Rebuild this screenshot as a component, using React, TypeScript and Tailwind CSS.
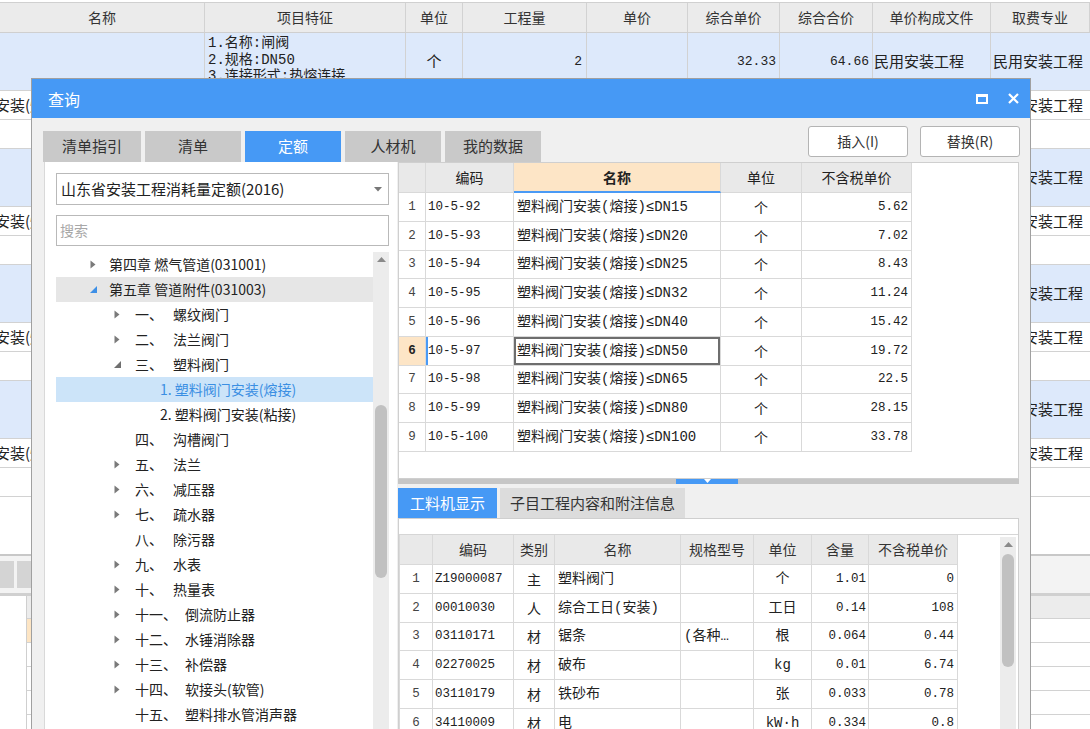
import React from "react";

const cjk = "font-['Noto_Sans_CJK_SC','Noto_Sans',sans-serif]";
const mono = "font-['Liberation_Mono','Noto_Sans_CJK_SC',monospace]";

const bgCols = "grid grid-cols-[205px_201px_57px_124px_101px_92px_93px_118px_99px]";

function Background() {
  const heads = ["名称", "项目特征", "单位", "工程量", "单价", "综合单价", "综合合价", "单价构成文件", "取费专业"];
  const groups = [0, 1, 2, 3];
  return (
    <div className="w-[1090px]">
      <div className="h-[3px] border-b border-[#d0d0d0] bg-white" />
      <div className={`${bgCols} h-[30px] bg-[#ebebeb] border-b border-[#cfcfcf]`}>
        {heads.map((h) => (
          <div key={h} className="flex items-center justify-center border-r border-[#d2d2d2] text-[14px] text-[#333]">
            {h}
          </div>
        ))}
      </div>
      {groups.map((g) => (
        <div key={g}>
          <div className={`${bgCols} h-[58px] bg-[#dde9fb] border-b border-[#d2d2d2] text-[15px] text-[#222]`}>
            <div className="border-r border-[#d2d2d2]" />
            <div className={`border-r border-[#d2d2d2] pl-[3px] pt-[2px] text-[14px] leading-[16.5px] ${mono} overflow-hidden`}>
              <div>1.名称:闸阀</div>
              <div>2.规格:DN50</div>
              <div>3.连接形式:热熔连接</div>
            </div>
            <div className="border-r border-[#d2d2d2] flex items-center justify-center">个</div>
            <div className={`border-r border-[#d2d2d2] flex items-center justify-end pr-[4px] text-[13px] ${mono}`}>2</div>
            <div className="border-r border-[#d2d2d2]" />
            <div className={`border-r border-[#d2d2d2] flex items-center justify-end pr-[3px] text-[13px] ${mono}`}>32.33</div>
            <div className={`border-r border-[#d2d2d2] flex items-center justify-end pr-[3px] text-[13px] ${mono}`}>64.66</div>
            <div className="border-r border-[#d2d2d2] flex items-center pl-[1px] whitespace-nowrap overflow-hidden">民用安装工程</div>
            <div className="flex items-center pl-[2px] whitespace-nowrap overflow-hidden">民用安装工程</div>
          </div>
          <div className={`${bgCols} h-[29px] border-b border-[#d2d2d2] text-[15px] text-[#222] bg-white`}>
            <div className="border-r border-[#d2d2d2] flex items-center overflow-hidden whitespace-nowrap">
              <span className="ml-[-5px]">安装(熔接)</span>
            </div>
            <div className="border-r border-[#d2d2d2]" />
            <div className="border-r border-[#d2d2d2]" />
            <div className="border-r border-[#d2d2d2]" />
            <div className="border-r border-[#d2d2d2]" />
            <div className="border-r border-[#d2d2d2]" />
            <div className="border-r border-[#d2d2d2]" />
            <div className="border-r border-[#d2d2d2]" />
            <div className="flex items-center pl-[2px] whitespace-nowrap overflow-hidden">民用安装工程</div>
          </div>
          <div className="h-[29px] border-b border-[#d2d2d2] bg-white" />
        </div>
      ))}
      <div className="h-[59px] border-b-2 border-[#c8c8c8] bg-white" />
      <div className="h-[37px] bg-[#f3f3f3] flex items-center gap-[3px]">
        <div className="w-[14px] h-[27px] bg-[#d4d4d4]" />
        <div className="w-[14px] h-[27px] bg-[#d4d4d4]" />
      </div>
      <div className="h-[3px] bg-[#d0d0d0]" />
      <div className="flex">
        <div className="w-[27px] h-[140px] border-r border-[#cfcfcf] bg-white" />
        <div className="flex-1">
          <div className="h-[23px] bg-[#ececec] border-b border-[#d2d2d2]" />
          <div className="h-[24px] border-b border-[#d2d2d2] flex">
            <div className="w-[8px] bg-[#fde5c4]" />
          </div>
          <div className="h-[24px] border-b border-[#d2d2d2]" />
          <div className="h-[24px] border-b border-[#d2d2d2]" />
          <div className="h-[24px] border-b border-[#d2d2d2]" />
        </div>
      </div>
    </div>
  );
}

function Collapsed() {
  return (
    <svg width="6" height="9" viewBox="0 0 6 9">
      <path d="M0.5 0.5 L5.5 4.5 L0.5 8.5 Z" fill="#7a7a7a" />
    </svg>
  );
}

function Expanded({ blue }: { blue?: boolean }) {
  return (
    <svg width="7" height="7" viewBox="0 0 7 7">
      <path d="M7 0 L7 7 L0 7 Z" fill={blue ? "#3d8fe6" : "#6f6f6f"} />
    </svg>
  );
}

type Node = { lvl: 0 | 1 | 2; arrow?: "c" | "eb" | "eg"; num?: string; text: string; gray?: boolean; sel?: boolean };

const tree: Node[] = [
  { lvl: 0, arrow: "c", text: "第四章 燃气管道(031001)" },
  { lvl: 0, arrow: "eb", text: "第五章 管道附件(031003)", gray: true },
  { lvl: 1, arrow: "c", num: "一、", text: "螺纹阀门" },
  { lvl: 1, arrow: "c", num: "二、", text: "法兰阀门" },
  { lvl: 1, arrow: "eg", num: "三、", text: "塑料阀门" },
  { lvl: 2, text: "1. 塑料阀门安装(熔接)", sel: true },
  { lvl: 2, text: "2. 塑料阀门安装(粘接)" },
  { lvl: 1, num: "四、", text: "沟槽阀门" },
  { lvl: 1, arrow: "c", num: "五、", text: "法兰" },
  { lvl: 1, arrow: "c", num: "六、", text: "减压器" },
  { lvl: 1, arrow: "c", num: "七、", text: "疏水器" },
  { lvl: 1, num: "八、", text: "除污器" },
  { lvl: 1, arrow: "c", num: "九、", text: "水表" },
  { lvl: 1, arrow: "c", num: "十、", text: "热量表" },
  { lvl: 1, arrow: "c", num: "十一、", text: "倒流防止器" },
  { lvl: 1, arrow: "c", num: "十二、", text: "水锤消除器" },
  { lvl: 1, arrow: "c", num: "十三、", text: "补偿器" },
  { lvl: 1, arrow: "c", num: "十四、", text: "软接头(软管)" },
  { lvl: 1, num: "十五、", text: "塑料排水管消声器" },
];

function TreeRow({ n }: { n: Node }) {
  const pad = n.lvl === 0 ? "pl-[29px]" : n.lvl === 1 ? "pl-[53px]" : "pl-[104px]";
  const tone = n.sel ? "bg-[#cce4f9] text-[#3b8fe3]" : n.gray ? "bg-[#e6e6e6] text-[#222]" : "text-[#222]";
  return (
    <div className={`h-[25px] flex items-center ${pad} ${tone} text-[14px] whitespace-nowrap`}>
      {n.lvl < 2 && (
        <span className="w-[16px] h-[25px] flex items-center justify-center">
          {n.arrow === "c" && <Collapsed />}
          {n.arrow === "eb" && <Expanded blue />}
          {n.arrow === "eg" && <Expanded />}
        </span>
      )}
      {n.lvl === 0 && <span className="ml-[8px]">{n.text}</span>}
      {n.lvl === 1 && (
        <>
          <span className="ml-[10px]">{n.num}</span>
          <span className={n.num && n.num.length > 2 ? "ml-[8px]" : "ml-[10px]"}>{n.text}</span>
        </>
      )}
      {n.lvl === 2 && <span>{n.text}</span>}
    </div>
  );
}

function ScrollArrow({ up }: { up?: boolean }) {
  return (
    <svg width="9" height="5" viewBox="0 0 9 5">
      <path d={up ? "M0 5 L4.5 0 L9 5 Z" : "M0 0 L4.5 5 L9 0 Z"} fill="#8a8a8a" />
    </svg>
  );
}

const topRows = [
  ["10-5-92", "DN15", "5.62"],
  ["10-5-93", "DN20", "7.02"],
  ["10-5-94", "DN25", "8.43"],
  ["10-5-95", "DN32", "11.24"],
  ["10-5-96", "DN40", "15.42"],
  ["10-5-97", "DN50", "19.72"],
  ["10-5-98", "DN65", "22.5"],
  ["10-5-99", "DN80", "28.15"],
  ["10-5-100", "DN100", "33.78"],
];
const rowH = ["h-[29px]", "h-[29px]", "h-[28px]", "h-[29px]", "h-[29px]", "h-[29px]", "h-[28px]", "h-[29px]", "h-[29px]"];

const lowRows = [
  ["1", "Z19000087", "主", "塑料阀门", "", "个", "1.01", "0"],
  ["2", "00010030", "人", "综合工日(安装)", "", "工日", "0.14", "108"],
  ["3", "03110171", "材", "锯条", "(各种…", "根", "0.064", "0.44"],
  ["4", "02270025", "材", "破布", "", "kg", "0.01", "6.74"],
  ["5", "03110179", "材", "铁砂布", "", "张", "0.033", "0.78"],
  ["6", "34110009", "材", "电", "", "kW·h", "0.334", "0.8"],
];

const line = "border-r border-b border-[#d9d9d9]";

function TopTable() {
  return (
    <div className="w-[514px] text-[#222]">
      <div className="flex h-[30px] text-[14px]">
        <div className={`w-[27px] ${line} bg-[#e9e9e9]`} />
        <div className={`w-[88px] ${line} bg-[#e9e9e9] flex items-center justify-center`}>编码</div>
        <div className="w-[207px] border-r border-[#d9d9d9] border-b-2 border-b-[#4a9af5] bg-[#fde5c6] flex items-center justify-center font-bold">名称</div>
        <div className={`w-[81px] ${line} bg-[#e9e9e9] flex items-center justify-center`}>单位</div>
        <div className={`w-[110px] ${line} bg-[#e9e9e9] flex items-center justify-center`}>不含税单价</div>
      </div>
      {topRows.map((r, i) => {
        const sel = i === 5;
        return (
          <div key={r[0]} className={`flex ${rowH[i]}`}>
            <div className={`w-[27px] ${line} flex items-center justify-center text-[12.5px] ${mono} ${sel ? "bg-[#fde5c6] font-bold text-[#222]" : "text-[#444]"}`}>
              {i + 1}
            </div>
            <div className={`w-[88px] ${line} flex items-center pl-[2px] text-[12.5px] ${mono} ${sel ? "shadow-[inset_2px_0_0_#4a9af5]" : ""}`}>
              {r[0]}
            </div>
            <div className={`w-[207px] ${line} flex items-center pl-[3px] text-[14px] ${mono} whitespace-nowrap ${sel ? "shadow-[inset_0_0_0_2px_#6e6e6e]" : ""}`}>
              塑料阀门安装(熔接)≤{r[1]}
            </div>
            <div className={`w-[81px] ${line} flex items-center justify-center text-[14px]`}>个</div>
            <div className={`w-[110px] ${line} flex items-center justify-end pr-[3px] text-[12.5px] ${mono}`}>{r[2]}</div>
          </div>
        );
      })}
    </div>
  );
}

function LowTable() {
  return (
    <div className="w-[559px] text-[#222]">
      <div className="flex h-[30px] text-[14px] bg-[#e9e9e9] text-[#333]">
        <div className={`w-[34px] ${line} border-l`} />
        <div className={`w-[81px] ${line} flex items-center justify-center`}>编码</div>
        <div className={`w-[41px] ${line} flex items-center justify-center`}>类别</div>
        <div className={`w-[126px] ${line} flex items-center justify-center`}>名称</div>
        <div className={`w-[73px] ${line} flex items-center justify-center`}>规格型号</div>
        <div className={`w-[58px] ${line} flex items-center justify-center`}>单位</div>
        <div className={`w-[57px] ${line} flex items-center justify-center`}>含量</div>
        <div className={`w-[89px] ${line} flex items-center justify-center`}>不含税单价</div>
      </div>
      {lowRows.map((r, i) => (
        <div key={r[0]} className={`flex ${rowH[i]}`}>
          <div className={`w-[34px] ${line} border-l flex items-center justify-center text-[12.5px] ${mono} text-[#444]`}>{r[0]}</div>
          <div className={`w-[81px] ${line} flex items-center pl-[2px] text-[12.5px] ${mono}`}>{r[1]}</div>
          <div className={`w-[41px] ${line} flex items-center justify-center text-[14px]`}>{r[2]}</div>
          <div className={`w-[126px] ${line} flex items-center pl-[3px] text-[14px] ${mono} whitespace-nowrap`}>{r[3]}</div>
          <div className={`w-[73px] ${line} flex items-center pl-[3px] text-[14px] ${mono} whitespace-nowrap overflow-hidden`}>{r[4]}</div>
          <div className={`w-[58px] ${line} flex items-center justify-center text-[14px] ${mono}`}>{r[5]}</div>
          <div className={`w-[57px] ${line} flex items-center justify-end pr-[2px] text-[12.5px] ${mono}`}>{r[6]}</div>
          <div className={`w-[89px] ${line} flex items-center justify-end pr-[3px] text-[12.5px] ${mono}`}>{r[7]}</div>
        </div>
      ))}
    </div>
  );
}

function Dialog() {
  const tabs = ["清单指引", "清单", "定额", "人材机", "我的数据"];
  return (
    <div className="absolute left-[31px] top-[78px] w-[1000px] h-[672px] border border-[#a0a0a0] bg-[#f0f0f0] flex flex-col">
      <div className="h-[39px] shrink-0 bg-[#4699f5] flex items-center justify-between pl-[16px] pr-[11px]">
        <span className="text-white text-[16px]">查询</span>
        <div className="flex items-center gap-[20px]">
          <span className="w-[12px] h-[10px] border-2 border-t-[3px] border-white" />
          <svg width="11" height="11" viewBox="0 0 11 11">
            <path d="M1 1 L10 10 M10 1 L1 10" stroke="white" strokeWidth="2.2" />
          </svg>
        </div>
      </div>

      <div className="h-[44px] shrink-0 flex justify-between">
        <div className="flex items-end gap-[4px] pl-[11px]">
          {tabs.map((t, i) => (
            <div
              key={t}
              className={`${i === 0 ? "w-[98px]" : "w-[96px]"} h-[31px] flex items-center justify-center text-[15px] ${t === "定额" ? "bg-[#4699f5] text-white" : "bg-[#c9c9c9] text-[#333]"}`}
            >
              {t}
            </div>
          ))}
        </div>
        <div className="flex gap-[12px] pt-[8px] pr-[10px]">
          <div className="w-[100px] h-[31px] rounded-[3px] border border-[#b4b4b4] bg-white flex items-center justify-center text-[14px] text-[#333]">
            插入(I)
          </div>
          <div className="w-[100px] h-[31px] rounded-[3px] border border-[#b4b4b4] bg-white flex items-center justify-center text-[14px] text-[#333]">
            替换(R)
          </div>
        </div>
      </div>

      <div className="flex-1 flex pl-[12px] min-h-0">
        <div className="w-[353px] border-l border-[#d9d9d9] bg-white flex flex-col min-h-0">
          <div className="mt-[11px] ml-[11px] w-[333px] h-[32px] border border-[#b9b9b9] flex items-center justify-between pl-[4px] pr-[6px]">
            <span className="text-[15px] text-[#222]">山东省安装工程消耗量定额(2016)</span>
            <svg width="8" height="5" viewBox="0 0 8 5">
              <path d="M0 0 L4 4.5 L8 0 Z" fill="#777" />
            </svg>
          </div>
          <div className="mt-[10px] ml-[11px] w-[333px] h-[31px] border border-[#b9b9b9] flex items-center pl-[3px]">
            <span className="text-[14px] text-[#a8a8a8]">搜索</span>
          </div>
          <div className="mt-[6px] ml-[11px] w-[333px] flex flex-1 min-h-0 overflow-hidden">
            <div className="w-[317px]">
              {tree.map((n) => (
                <TreeRow key={n.text} n={n} />
              ))}
            </div>
            <div className="w-[16px] bg-[#ececec] flex flex-col items-center">
              <div className="h-[14px] flex items-center justify-center">
                <ScrollArrow up />
              </div>
              <div className="mt-[139px] w-[12px] h-[173px] rounded-full bg-[#c1c1c1]" />
              <div className="flex-1" />
              <div className="h-[12px] flex items-center justify-center">
                <ScrollArrow />
              </div>
            </div>
          </div>
        </div>

        <div className="w-[621px] ml-[1px] flex flex-col min-h-0">
          <div className="h-[317px] shrink-0 bg-white border border-[#cfcfcf]">
            <TopTable />
          </div>
          <div className="h-[5px] shrink-0 bg-[#c6c6c6] flex">
            <div className="ml-[278px] w-[62px] h-[5px] bg-[#4699f5] flex justify-center">
              <svg width="7" height="4" viewBox="0 0 7 4">
                <path d="M0 0 L3.5 4 L7 0 Z" fill="white" />
              </svg>
            </div>
          </div>
          <div className="h-[34px] shrink-0 flex items-end">
            <div className="w-[99px] h-[30px] bg-[#4699f5] text-white text-[15px] flex items-center justify-center">工料机显示</div>
            <div className="ml-[3px] w-[185px] h-[30px] bg-[#dcdcdc] text-[#333] text-[15px] flex items-center justify-center">子目工程内容和附注信息</div>
          </div>
          <div className="flex-1 bg-white border border-[#cfcfcf] flex flex-col min-h-0">
            <div className="h-[16px] shrink-0 border-b border-[#d6d6d6]" />
            <div className="flex flex-1 min-h-0">
              <LowTable />
              <div className="flex-1" />
              <div className="w-[16px] mr-[2px] mt-[2px] bg-[#ececec] flex flex-col items-center">
                <div className="h-[14px] flex items-center justify-center">
                  <ScrollArrow up />
                </div>
                <div className="mt-[3px] w-[12px] h-[113px] rounded-full bg-[#c1c1c1]" />
                <div className="flex-1" />
                <div className="h-[12px] flex items-center justify-center">
                  <ScrollArrow />
                </div>
              </div>
            </div>
          </div>
        </div>
      </div>
    </div>
  );
}

export default function App() {
  return (
    <div className={`relative w-[1090px] h-[729px] overflow-hidden bg-white ${cjk}`}>
      <Background />
      <Dialog />
    </div>
  );
}
